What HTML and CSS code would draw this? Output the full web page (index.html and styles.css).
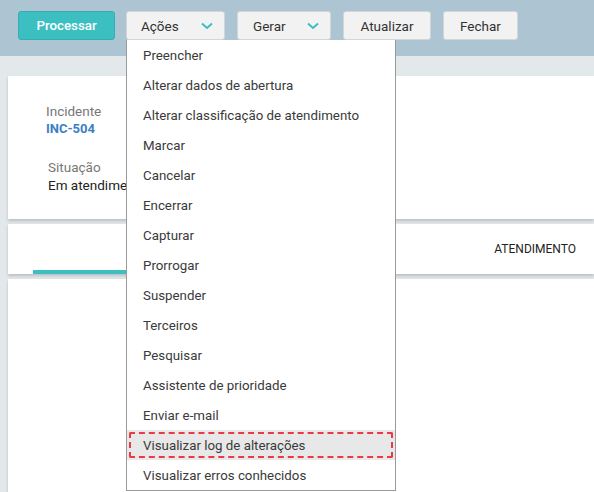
FILE: index.html
```html
<!DOCTYPE html>
<html lang="pt-BR">
<head>
    <meta charset="UTF-8">
    <meta name="viewport" content="width=device-width, initial-scale=1.0">
    <title>Incidente INC-504</title>
    <link rel="stylesheet" href="styles.css">
</head>
<body>
    <div class="toolbar">
        <button class="btn btn-primary">Processar</button>
        <div class="dropdown">
            <button class="btn btn-menu">Ações
                <svg class="chevron" width="12" height="8" viewBox="0 0 12 8"><path d="M1 1.5 L6 6 L11 1.5" fill="none" stroke="#3bbfc1" stroke-width="2"/></svg>
            </button>
            <ul class="menu">
                <li>Preencher</li>
                <li>Alterar dados de abertura</li>
                <li>Alterar classificação de atendimento</li>
                <li>Marcar</li>
                <li>Cancelar</li>
                <li>Encerrar</li>
                <li>Capturar</li>
                <li>Prorrogar</li>
                <li>Suspender</li>
                <li>Terceiros</li>
                <li>Pesquisar</li>
                <li>Assistente de prioridade</li>
                <li>Enviar e-mail</li>
                <li class="focused"><span class="focus-ring"></span>Visualizar log de alterações</li>
                <li>Visualizar erros conhecidos</li>
            </ul>
        </div>
        <button class="btn btn-menu btn-gerar">Gerar
            <svg class="chevron" width="12" height="8" viewBox="0 0 12 8"><path d="M1 1.5 L6 6 L11 1.5" fill="none" stroke="#3bbfc1" stroke-width="2"/></svg>
        </button>
        <button class="btn btn-atualizar">Atualizar</button>
        <button class="btn btn-fechar">Fechar</button>
    </div>

    <div class="content">
        <div class="card card-info">
            <div class="field">
                <span class="label">Incidente</span>
                <span class="value link">INC-504</span>
            </div>
            <div class="field field-status">
                <span class="label">Situação</span>
                <span class="value">Em atendimento</span>
            </div>
        </div>
        <div class="card card-tabs">
            <div class="tab active"></div>
            <div class="tab"></div>
            <div class="tab tab-label">ATENDIMENTO</div>
        </div>
        <div class="card card-body"></div>
    </div>
</body>
</html>
```

FILE: styles.css
```css
body {
    margin: 0;
    font-family: Roboto, "Liberation Sans", sans-serif;
    background: #e3e8ea;
    height: 492px;
    overflow: hidden;
}

.toolbar {
    height: 56px;
    background: #adc5d2;
    display: flex;
    align-items: flex-start;
    padding: 11px 0 0 18px;
    box-sizing: border-box;
    gap: 11px;
}

.btn {
    height: 29px;
    font-family: inherit;
    font-size: 13.5px;
    color: #333;
    background: #f2f2f2;
    border: 1px solid #d2d6d8;
    border-radius: 3px;
    padding: 0;
    cursor: pointer;
    box-sizing: border-box;
}

.btn-primary {
    width: 97px;
    background: #3bbfc1;
    border-color: #34aeb0;
    color: #fff;
    font-weight: 500;
    font-size: 13.3px;
}

.dropdown {
    position: relative;
}

.btn-menu {
    width: 99px;
    display: flex;
    align-items: center;
    justify-content: space-between;
    padding: 0 11px 0 14px;
}

.btn-gerar {
    width: 94px;
    margin-left: 1px;
    padding-left: 15px;
}

.btn-atualizar {
    width: 88px;
    margin-left: 1px;
}

.btn-fechar {
    width: 75px;
    margin-left: 1px;
}

.chevron {
    display: block;
}

.menu {
    position: absolute;
    top: 29px;
    left: 0;
    z-index: 10;
    width: 270px;
    margin: 0;
    padding: 0;
    list-style: none;
    background: #fff;
    border: 1px solid #9a9a9a;
    border-top: none;
    box-sizing: border-box;
}

.menu li {
    position: relative;
    height: 30px;
    line-height: 31px;
    padding-left: 16px;
    font-size: 13.3px;
    color: #3a3a3a;
    white-space: nowrap;
}

.menu li.focused {
    background: #e8e8e8;
}

.focus-ring {
    position: absolute;
    top: 2px;
    left: 2px;
    right: 2px;
    bottom: 2px;
    border: 2px dashed #ea3a48;
    border-radius: 2px;
}

.content {
    padding: 20px 0 0 8px;
    display: flex;
    flex-direction: column;
    gap: 5px;
}

.card {
    background: #fff;
    box-shadow: 0 2px 3px rgba(0, 0, 0, 0.18);
}

.card-info {
    height: 143px;
    padding: 26px 0 0 38px;
    box-sizing: border-box;
}

.field {
    display: flex;
    flex-direction: column;
    font-size: 13.5px;
}

.label {
    color: #777;
    line-height: 18px;
}

.value {
    color: #222;
    line-height: 18px;
}

.value.link {
    color: #3a7fc4;
    font-weight: 700;
    font-size: 13px;
}

.field-status {
    margin: 20px 0 0 2px;
}

.card-tabs {
    height: 50px;
    display: flex;
}

.tab {
    width: 94px;
    margin-left: 25px;
    box-sizing: border-box;
}

.tab.active {
    border-bottom: 4px solid #3bbfc1;
}

.tab.tab-label {
    margin-left: auto;
    width: auto;
    padding-right: 18px;
    font-size: 12px;
    font-weight: 400;
    color: #222;
    line-height: 50px;
}

.card-body {
    height: 213px;
}
```
